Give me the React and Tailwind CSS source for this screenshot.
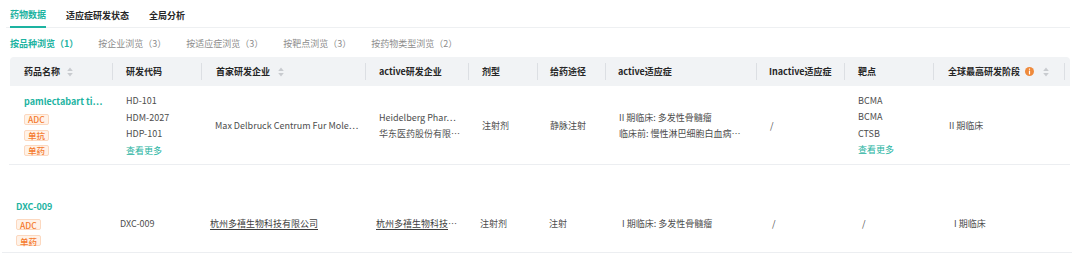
import React from "react";

const GREEN = "text-[#1db3a1]";

function SortIcon() {
  return (
    <svg width="6" height="10" viewBox="0 0 6 10" className="shrink-0">
      <path d="M3 0.5 L5.8 4 L0.2 4 Z" fill="#c8cbcf" />
      <path d="M0.2 6 L5.8 6 L3 9.5 Z" fill="#c8cbcf" />
    </svg>
  );
}

function InfoIcon() {
  return (
    <svg width="9" height="9" viewBox="0 0 9 9" className="shrink-0">
      <circle cx="4.5" cy="4.5" r="4.5" fill="#ef8a3c" />
      <rect x="3.9" y="1.6" width="1.2" height="1.2" rx="0.5" fill="#fff" />
      <rect x="3.9" y="3.6" width="1.2" height="3.8" rx="0.4" fill="#fff" />
    </svg>
  );
}

function Tag({ children }) {
  return (
    <span className="self-start inline-flex items-center h-[11px] px-[3px] text-[8.5px] leading-none font-medium text-[#f57a2e] bg-[#fff2e8] border border-[#fcd8bf] rounded-[2px]">
      {children}
    </span>
  );
}

const Sep = () => <div className="w-px h-[17px] bg-[#dcdfe3] shrink-0" />;
const Gap = () => <div className="w-px shrink-0" />;

export default function App() {
  return (
    <div className="w-[1080px] h-[272px] bg-white overflow-hidden text-[9px] text-[#4d4d4d] font-['Noto_Sans_CJK_SC','Noto_Sans',sans-serif]">
      {/* top tabs */}
      <div className="ml-[6px] w-[1064px] h-[28px] border-b border-[#eef0f2] flex gap-[20px] pl-[4px]">
        <div className={`h-[28px] flex items-center pt-[4px] border-b-2 border-[#1db3a1] -mb-px font-bold ${GREEN}`}>
          药物数据
        </div>
        <div className="h-[28px] flex items-center pt-[4px] font-semibold text-[#262626]">适应症研发状态</div>
        <div className="h-[28px] flex items-center pt-[4px] font-semibold text-[#262626]">全局分析</div>
      </div>

      {/* sub tabs */}
      <div className="ml-[10px] h-[29px] flex items-center pt-[3px] gap-[20px] text-[#8c8c8c]">
        <span className={`font-semibold ${GREEN}`}>按品种浏览（1）</span>
        <span>按企业浏览（3）</span>
        <span>按适应症浏览（3）</span>
        <span>按靶点浏览（3）</span>
        <span>按药物类型浏览（2）</span>
      </div>

      {/* header */}
      <div className="ml-[10px] w-[1060px] h-[29px] bg-[#f1f3f5] rounded-t-[4px] flex items-center font-bold text-[#262626]">
        <div className="w-[102px] pl-[14px] flex items-center gap-[7px]">药品名称<SortIcon /></div>
        <Sep />
        <div className="w-[88px] pl-[13px]">研发代码</div>
        <Sep />
        <div className="w-[163px] pl-[14px] flex items-center gap-[8px]">首家研发企业<SortIcon /></div>
        <Sep />
        <div className="w-[102px] pl-[13px]">active研发企业</div>
        <Sep />
        <div className="w-[68px] pl-[13px]">剂型</div>
        <Sep />
        <div className="w-[67px] pl-[12px]">给药途径</div>
        <Sep />
        <div className="w-[150px] pl-[12px]">active适应症</div>
        <Sep />
        <div className="w-[87px] pl-[12px]">Inactive适应症</div>
        <Sep />
        <div className="w-[88px] pl-[13px]">靶点</div>
        <Sep />
        <div className="w-[130px] pl-[14px] flex items-center gap-[5px]">全球最高研发阶段<InfoIcon /><span className="ml-[4px]"><SortIcon /></span></div>
        <Sep />
      </div>

      {/* row 1 */}
      <div className="ml-[9px] w-[1061px] h-[79px] pt-[2px] border-b border-[#eceef1] flex items-center">
        <div className="w-[103px] pl-[15px] flex flex-col">
          <span className={`leading-[12px] font-semibold ${GREEN}`}>pamlectabart ti…</span>
          <div className="mt-[6px] flex flex-col gap-[4.5px]">
            <Tag>ADC</Tag>
            <Tag>单抗</Tag>
            <Tag>单药</Tag>
          </div>
        </div>
        <Gap />
        <div className="w-[88px] pl-[13px] flex flex-col leading-[16.5px]">
          <span>HD-101</span>
          <span>HDM-2027</span>
          <span>HDP-101</span>
          <span className={GREEN}>查看更多</span>
        </div>
        <Gap />
        <div className="w-[163px] pl-[13px] whitespace-nowrap">Max Delbruck Centrum Fur Mole…</div>
        <Gap />
        <div className="w-[102px] pl-[13px] flex flex-col leading-[16.5px] whitespace-nowrap">
          <span>Heidelberg Phar…</span>
          <span>华东医药股份有限…</span>
        </div>
        <Gap />
        <div className="w-[68px] pl-[13px]">注射剂</div>
        <Gap />
        <div className="w-[67px] pl-[12px]">静脉注射</div>
        <Gap />
        <div className="w-[150px] pl-[13px] flex flex-col leading-[16.5px] whitespace-nowrap">
          <span>II 期临床: 多发性骨髓瘤</span>
          <span>临床前: 慢性淋巴细胞白血病…</span>
        </div>
        <Gap />
        <div className="w-[87px] pl-[13px]">/</div>
        <Gap />
        <div className="w-[88px] pl-[13px] flex flex-col leading-[16.5px] pb-[1px]">
          <span>BCMA</span>
          <span>BCMA</span>
          <span>CTSB</span>
          <span className={GREEN}>查看更多</span>
        </div>
        <Gap />
        <div className="w-[130px] pl-[15px]">II 期临床</div>
      </div>

      {/* row 2 */}
      <div className="ml-[2px] w-[1070px] h-[88px] pt-[30px] border-b border-[#eceef1] flex">
        <div className="h-[57px] w-full flex items-center">
          <div className="w-[104px] pl-[14px] flex flex-col">
            <span className={`leading-[12px] font-semibold ${GREEN}`}>DXC-009</span>
            <div className="mt-[6.5px] flex flex-col gap-[5px]">
              <Tag>ADC</Tag>
              <Tag>单药</Tag>
            </div>
          </div>
          <div className="w-[90px] pl-[14px]">DXC-009</div>
          <div className="w-[166px] pl-[14px] whitespace-nowrap">
            <span className="underline underline-offset-[2px] text-[#3d3d3d]">杭州多禧生物科技有限公司</span>
          </div>
          <div className="w-[104px] pl-[14px] whitespace-nowrap">
            <span className="underline underline-offset-[2px] text-[#3d3d3d]">杭州多禧生物科技</span>…
          </div>
          <div className="w-[69px] pl-[14px]">注射剂</div>
          <div className="w-[73px] pl-[14px]">注射</div>
          <div className="w-[150px] pl-[14px] whitespace-nowrap">I 期临床: 多发性骨髓瘤</div>
          <div className="w-[90px] pl-[14px]">/</div>
          <div className="w-[92px] pl-[14px]">/</div>
          <div className="w-[132px] pl-[14px]">I 期临床</div>
        </div>
      </div>
    </div>
  );
}
